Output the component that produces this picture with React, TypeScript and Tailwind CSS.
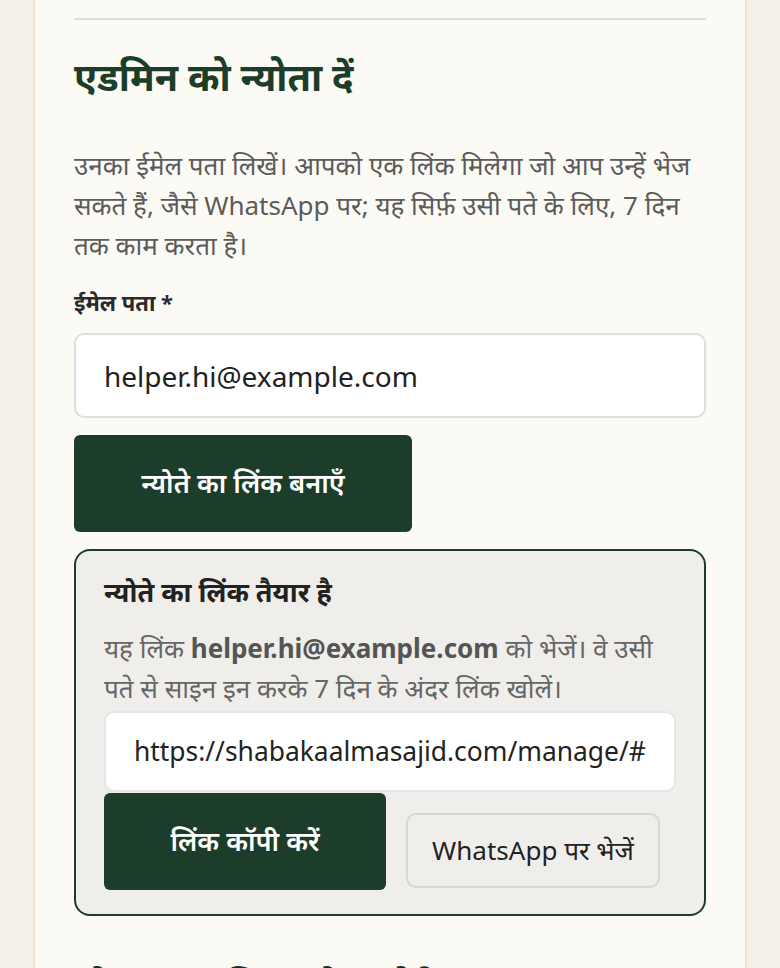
export default function App() {
  return (
    <div
      className="min-h-[968px] bg-[#f5f1ea]"
      style={{ fontFamily: '"Noto Sans", "Noto Sans Devanagari", sans-serif' }}
    >
      <div className="mx-[33px] min-h-[968px] border-x-2 border-[#efe4ca] bg-[#fcfaf4] px-[39px] pt-[18px]">
        <hr className="border-0 border-t-2 border-[#dcdcdc]" />

        <h2 className="mt-[32px] text-[38px] font-bold leading-[48px] text-[#1c3d2a]">
          एडमिन को न्योता दें
        </h2>

        <p className="mt-[45px] text-[26px] leading-[40px] text-[#5b5b5b]">
          उनका ईमेल पता लिखें। आपको एक लिंक मिलेगा जो आप उन्हें भेज सकते हैं, जैसे WhatsApp पर; यह सिर्फ़ उसी पते के लिए, 7 दिन तक काम करता है।
        </p>

        <label className="mt-[22px] block text-[22px] font-bold leading-[30px] text-[#2a2a2a]">
          ईमेल पता *
        </label>

        <div className="mt-[16px] flex h-[85px] items-center rounded-[10px] border-2 border-[#dedede] bg-white px-[28px] text-[28px] text-[#222]">
          helper.hi@example.com
        </div>

        <button className="mt-[17px] flex h-[97px] w-[338px] items-center justify-center rounded-[6px] bg-[#1c3d2a] text-[27px] font-semibold text-white">
          न्योते का लिंक बनाएँ
        </button>

        <div className="mt-[17px] rounded-[16px] border-2 border-[#1c3d2a] bg-[#efeeea] px-[28px] pb-[24px] pt-[23px]">
          <h3 className="text-[27px] font-bold leading-[36px] text-[#222]">
            न्योते का लिंक तैयार है
          </h3>
          <p className="mt-[18px] text-[26px] leading-[40px] text-[#666]">
            यह लिंक <strong className="font-bold text-[#555]">helper.hi@example.com</strong> को भेजें। वे उसी पते से साइन इन करके 7 दिन के अंदर लिंक खोलें।
          </p>
          <div className="mt-[3px] flex h-[81px] items-center overflow-hidden rounded-[10px] border-2 border-[#e6e6e6] bg-white px-[28px] text-[26.4px] whitespace-nowrap text-[#222]">
            https://shabakaalmasajid.com/manage/#
          </div>
          <div className="mt-[1px] flex items-end gap-[20px]">
            <button className="flex h-[97px] w-[282px] items-center justify-center rounded-[6px] bg-[#1c3d2a] text-[27px] font-semibold text-white">
              लिंक कॉपी करें
            </button>
            <button className="mb-[2px] flex h-[75px] w-[254px] items-center justify-center rounded-[10px] border-2 border-[#d6d6d6] bg-[#efeeea] text-[26px] text-[#222]">
              WhatsApp पर भेजें
            </button>
          </div>
        </div>

        <h2 className="mt-[46px] text-[38px] font-bold leading-[48px] text-[#1f2a24]">
          मौजूदा एडमिन और न्योते
        </h2>
      </div>
    </div>
  );
}
